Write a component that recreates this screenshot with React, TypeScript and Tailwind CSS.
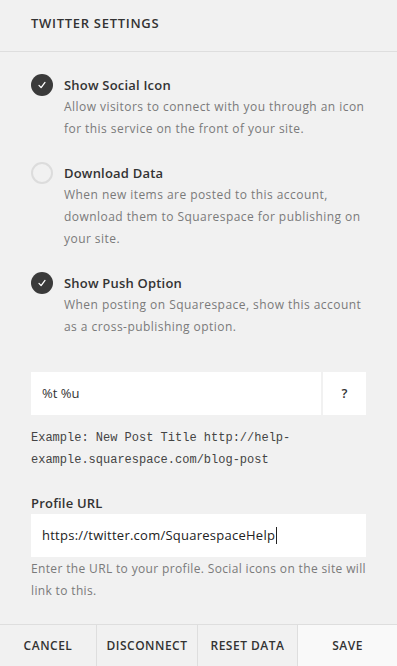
import React from "react";

const options = [
  {
    label: "Show Social Icon",
    checked: true,
    desc: "Allow visitors to connect with you through an icon for this service on the front of your site.",
  },
  {
    label: "Download Data",
    checked: false,
    desc: "When new items are posted to this account, download them to Squarespace for publishing on your site.",
  },
  {
    label: "Show Push Option",
    checked: true,
    desc: "When posting on Squarespace, show this account as a cross-publishing option.",
  },
];

function Check({ checked }: { checked: boolean }) {
  if (!checked) {
    return <div className="h-[22px] w-[22px] shrink-0 rounded-full border-2 border-[#dcdcdc]" />;
  }
  return (
    <div className="flex h-[22px] w-[22px] shrink-0 items-center justify-center rounded-full bg-[#3a3a3a]">
      <svg width="10" height="10" viewBox="0 0 10 10" fill="none">
        <path d="M2 5.4 L4.1 7.6 L8 2.4" stroke="#fff" strokeWidth="1.3" strokeLinecap="round" strokeLinejoin="round" />
      </svg>
    </div>
  );
}

export default function App() {
  return (
    <div className="flex h-[666px] w-[397px] flex-col bg-[#f1f1f1] font-['Open_Sans',sans-serif] text-[#333]">
      <div className="h-[52px] border-b border-[#dedede] px-[31px] pt-[14px]">
        <h1 className="text-[13px] font-semibold leading-[18px] tracking-[0.7px] text-[#333]">TWITTER SETTINGS</h1>
      </div>

      <div className="flex flex-col gap-[22px] pl-[31px] pr-[32px] pt-[22px]">
        {options.map((o) => (
          <div key={o.label} className="flex gap-[11px]">
            <Check checked={o.checked} />
            <div>
              <div className="text-[13px] font-semibold leading-[22px] tracking-[0.2px] text-[#333]">{o.label}</div>
              <p className="text-[12px] leading-[22px] tracking-[0.45px] text-[#7a7a7a]">{o.desc}</p>
            </div>
          </div>
        ))}
      </div>

      <div className="px-[31px] pt-[34px]">
        <div className="flex h-[43px] bg-white">
          <div className="flex flex-1 items-center px-[11px] text-[13px] text-[#333]">%t %u</div>
          <div className="flex w-[45px] items-center justify-center border-l-2 border-[#f1f1f1] text-[13px] font-semibold text-[#333]">
            ?
          </div>
        </div>
        <p className="mt-[12px] font-['Liberation_Mono',monospace] text-[12px] leading-[22px] text-[#444]">
          Example: New Post Title http://help-
          <br />
          example.squarespace.com/blog-post
        </p>

        <div className="mt-[21px] text-[13px] font-semibold leading-[22px] tracking-[0.2px] text-[#333]">Profile URL</div>
        <div className="flex h-[43px] items-center bg-white px-[11px] text-[13px] tracking-[0.25px] text-[#222]">
          https://twitter.com/SquarespaceHelp
          <span className="ml-[1px] inline-block h-[17px] w-px bg-[#222]" />
        </div>
        <p className="mt-px text-[12px] leading-[22px] tracking-[0.35px] text-[#7a7a7a]">
          Enter the URL to your profile. Social icons on the site will link to this.
        </p>
      </div>

      <div className="mt-auto flex h-[42px] border-t border-[#dedede] text-[12px] font-semibold tracking-[0.5px] text-[#333]">
        <button className="flex w-[97px] items-center justify-center border-r border-[#dedede]">CANCEL</button>
        <button className="flex w-[101px] items-center justify-center border-r border-[#dedede]">DISCONNECT</button>
        <button className="flex w-[100px] items-center justify-center border-r border-[#dedede]">RESET DATA</button>
        <button className="flex flex-1 items-center justify-center bg-[#f9f9f9]">SAVE</button>
      </div>
    </div>
  );
}
